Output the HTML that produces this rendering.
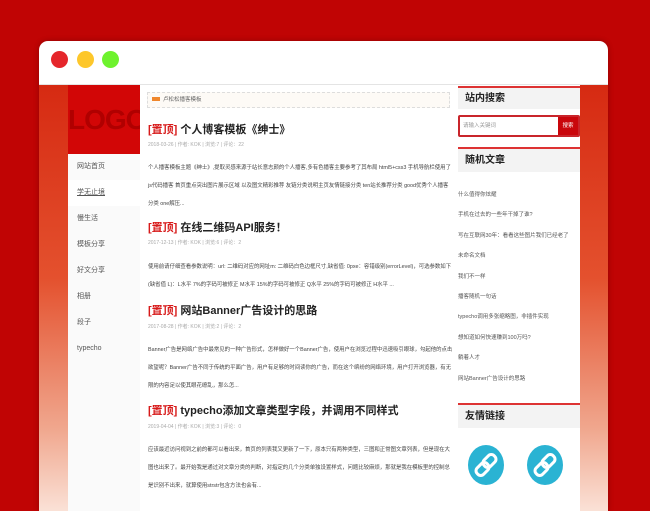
<!DOCTYPE html>
<html><head><meta charset="utf-8"><style>
*{margin:0;padding:0;box-sizing:border-box}
body{width:650px;height:500px;overflow:hidden;background:#c00404;font-family:"Liberation Sans","Noto Sans CJK SC",sans-serif;position:relative}
.frame{position:absolute;left:39px;top:41px;width:569px;height:470px;background:#fff;border-radius:9px 9px 0 0;overflow:hidden;box-shadow:0 0 6px rgba(0,0,0,.25)}
.dot{position:absolute;top:10px;width:17px;height:17px;border-radius:50%}
.abs{position:absolute}
.strip{position:absolute;top:44px;height:430px;background:linear-gradient(#d62a12,#e4512e 45%,#f0a78e 80%,#fbe4da)}
.nav div{height:26px;line-height:26px;padding-left:9px;font-size:7px;color:#555}
.t{position:absolute;left:8px;font-size:11px;font-weight:bold;color:#222;white-space:nowrap}
.t span{color:#d71a1a}
.m{position:absolute;left:8px;font-size:5px;color:#aaa;white-space:nowrap}
.e{position:absolute;left:8px;width:305px;font-size:5.4px;line-height:18px;color:#444}
.h{position:absolute;left:0;width:122px;height:23px;background:#f3f3f3;border-top:2px solid #d33;font-size:10px;font-weight:bold;padding-left:7px;line-height:21px;color:#222}
.side li{list-style:none;height:20.4px;line-height:20.4px;font-size:5.5px;color:#555;white-space:nowrap}
.ic{position:absolute;width:36px;height:40px;border-radius:50%;background:#2ab3d3}
</style></head><body>
<div class="frame">
 <div class="dot" style="left:12px;background:#e5262b"></div>
 <div class="dot" style="left:38px;background:#fdc72b"></div>
 <div class="dot" style="left:63px;background:#6ef22e"></div>
 <div class="abs" style="left:0;top:43px;width:569px;height:1px;background:#e4e4e4"></div>
 <div class="strip" style="left:0;width:29px"></div>
 <div class="strip" style="left:541px;width:28px"></div>
 <div class="abs" style="left:29px;top:44px;width:72px;height:69px;background:#d20606;color:#b00000;font-size:28px;font-weight:bold;line-height:69px;text-align:center;overflow:hidden;white-space:nowrap;letter-spacing:-1px">LOGO</div>
 <div class="abs" style="left:29px;top:113px;width:72px;height:360px;background:#fafafa"></div>
 <div class="abs nav" style="left:29px;top:113px;width:72px">
  <div>网站首页</div><div style="background:#fff;text-decoration:underline">学无止境</div><div>慢生活</div><div>模板分享</div><div>好文分享</div><div>相册</div><div>段子</div><div>typecho</div>
 </div>
 <div class="abs" style="left:101px;top:44px;width:318px;height:430px">
  <div class="abs" style="left:7px;top:7px;width:303px;height:16px;border:1px dashed #ddd;background:#fdfaf6;font-size:5.5px;color:#666;line-height:14px;padding-left:4px"><span style="display:inline-block;width:8px;height:4px;background:#f0872d;margin-right:3px"></span>卢松松播客模板</div>
  <div class="t" style="top:36px"><span>[置顶]</span> 个人博客模板《绅士》</div>
  <div class="m" style="top:56px">2018-03-26 | 作者: KOK | 浏览:7 | 评论：22</div>
  <div class="e" style="top:74px">个人播客模板主题《绅士》,提取灵感来源于站长意志颜的个人播客,多有色播客主要参考了其布局 html5+css3 手机导航栏使用了js代码播客 首页重点突出图片展示区域 以及图文精彩推荐 友链分类说明主页友情链接分类 ten站长推荐分类 good优秀个人播客分类 one解压...</div>
  <div class="t" style="top:134px"><span>[置顶]</span> 在线二维码API服务！</div>
  <div class="m" style="top:154px">2017-12-13 | 作者: KOK | 浏览:6 | 评论：2</div>
  <div class="e" style="top:173px">使用前请仔细查看参数说明：url: 二维码对应的网址m: 二维码白色边框尺寸,缺省值: 0pxe：容错级别(errorLevel)，可选参数如下(缺省值 L)：L水平 7%的字码可被修正 M水平 15%的字码可被修正 Q水平 25%的字码可被修正 H水平 ...</div>
  <div class="t" style="top:217px"><span>[置顶]</span> 网站Banner广告设计的思路</div>
  <div class="m" style="top:238px">2017-08-28 | 作者: KOK | 浏览:2 | 评论：2</div>
  <div class="e" style="top:256px">Banner广告是网络广告中最常见的一种广告形式，怎样做好一个Banner广告，使用户在浏览过程中迅速吸引眼球，勾起他的点击欲望呢？Banner广告不同于传统的平面广告，用户有足够的时间读你的广告，而在这个缤纷的网络环境，用户打开浏览器，有无限的内容足以使其眼花缭乱，那么怎...</div>
  <div class="t" style="top:317px"><span>[置顶]</span> typecho添加文章类型字段，并调用不同样式</div>
  <div class="m" style="top:338px">2019-04-04 | 作者: KOK | 浏览:3 | 评论：0</div>
  <div class="e" style="top:356px">应该最近访问视到之前的都可以看出来，首页的列表我又更新了一下，原本只有两种类型，三图和正常图文章列表，但是现在大图也出来了。最开始我是通过对文章分类的判断，对指定的几个分类单独设置样式，问题比较麻烦，那就是我在模板里的控制总是识别不出来，就算使用strstr包含方法也会有...</div>
 </div>
 <div class="abs side" style="left:419px;top:44px;width:122px;height:430px">
  <div class="h" style="top:1px">站内搜索</div>
  <div class="abs" style="left:0;top:30px;width:122px;height:22px;border:2px solid #c9252b;border-radius:2px;background:#fff;font-size:5.5px;color:#999;line-height:18px;padding-left:3px">请输入关键词<span style="position:absolute;right:0;top:0;width:20px;height:18px;background:#c9060c;color:#fff;text-align:center">搜索</span></div>
  <div class="h" style="top:62px;height:25px;line-height:23px">随机文章</div>
  <ul style="position:absolute;top:100px;left:0">
   <li>什么值得你炫耀</li><li>手机在过去的一些年干掉了谁?</li><li>写在互联网30年：看看这些图片我们已经老了</li><li>未命名文档</li><li>我们不一样</li><li>播客随机一句话</li><li>typecho调用多张缩略图，非插件实现</li><li>想知道如何快速赚到100万吗?</li><li>躺着人才</li><li>网站Banner广告设计的思路</li>
  </ul>
  <div class="h" style="top:318px;height:25px;line-height:23px">友情链接</div>
  <div class="ic" style="left:10px;top:360px"></div>
  <div class="ic" style="left:69px;top:360px"></div>
  <svg class="abs" style="left:10px;top:360px" width="36" height="40" viewBox="0 0 36 40"><g fill="none" stroke="#fff" stroke-width="3"><rect x="17" y="9" width="9" height="14" rx="4" transform="rotate(45 21.5 16)"/><rect x="10" y="17" width="9" height="14" rx="4" transform="rotate(45 14.5 24)"/></g></svg>
  <svg class="abs" style="left:69px;top:360px" width="36" height="40" viewBox="0 0 36 40"><g fill="none" stroke="#fff" stroke-width="3"><rect x="17" y="9" width="9" height="14" rx="4" transform="rotate(45 21.5 16)"/><rect x="10" y="17" width="9" height="14" rx="4" transform="rotate(45 14.5 24)"/></g></svg>
 </div>
</div>
</body></html>
